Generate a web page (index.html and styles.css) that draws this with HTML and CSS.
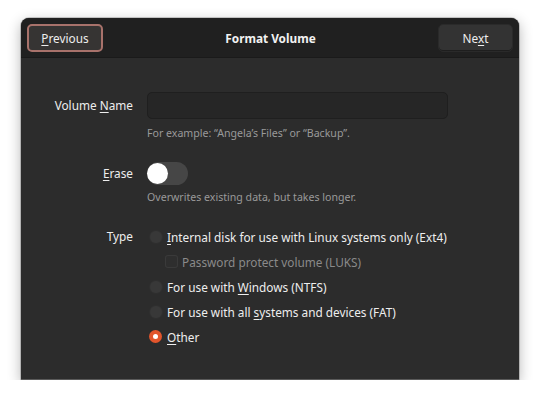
FILE: index.html
```html
<!DOCTYPE html>
<html>
<head>
<meta charset="utf-8">
<link rel="stylesheet" href="styles.css">
</head>
<body>
<div class="window">
  <header class="headerbar">
    <button class="btn btn-prev"><u>P</u>revious</button>
    <div class="title">Format Volume</div>
    <button class="btn btn-next">Ne<u>x</u>t</button>
  </header>
  <main class="content">
    <div class="row row-name">
      <div class="label">Volume <u>N</u>ame</div>
      <div class="field">
        <div class="entry"></div>
        <div class="hint">For example: “Angela’s Files” or “Backup”.</div>
      </div>
    </div>
    <div class="row row-erase">
      <div class="label"><u>E</u>rase</div>
      <div class="field">
        <div class="switch"><span class="knob"></span></div>
        <div class="hint">Overwrites existing data, but takes longer.</div>
      </div>
    </div>
    <div class="row row-type">
      <div class="label">Type</div>
      <div class="field options">
        <div class="opt"><span class="radio"></span><span><u>I</u>nternal disk for use with Linux systems only (Ext4)</span></div>
        <div class="opt sub disabled"><span class="check"></span><span>Password protect volume (LUKS)</span></div>
        <div class="opt"><span class="radio"></span><span>For use with <u>W</u>indows (NTFS)</span></div>
        <div class="opt"><span class="radio"></span><span>For use with all <u>s</u>ystems and devices (FAT)</span></div>
        <div class="opt"><span class="radio on"></span><span><u>O</u>ther</span></div>
      </div>
    </div>
  </main>
</div>
</body>
</html>
```

FILE: styles.css
```css
html, body {
  margin: 0;
  padding: 0;
  background: #ffffff;
}
body {
  font-family: "Noto Sans", "DejaVu Sans", sans-serif;
  font-size: 11.8px;
  color: #eeeeee;
  padding: 18px 0 0 21px;
}
.window {
  width: 498px;
  height: 362px;
  border-radius: 8px 8px 0 0;
  background: #2c2c2c;
  box-shadow: 0 4px 14px rgba(0,0,0,0.3), 0 0 0 1px rgba(0,0,0,0.18);
  overflow: hidden;
  display: flex;
  flex-direction: column;
  border-bottom: 1px solid #5a5a5a;
  box-sizing: border-box;
}
.headerbar {
  height: 40px;
  background: #202020;
  display: flex;
  align-items: center;
  justify-content: space-between;
  padding: 0 6px;
  border-bottom: 1px solid #1a1a1a;
  box-sizing: border-box;
}
.title {
  font-weight: bold;
  font-size: 11.8px;
  color: #f2f2f2;
}
.btn {
  height: 28px;
  font-family: inherit;
  font-size: 11.8px;
  color: #eeeeee;
  background: #343434;
  border: 1px solid #2a2a2a;
  border-radius: 5px;
  padding: 0;
  box-sizing: border-box;
}
.btn-prev {
  width: 76px;
  border: 2px solid #a8726b;
  background: #363433;
}
.btn-next {
  width: 75px;
  background: #333333;
  box-shadow: inset 0 -1px 0 #1e1e1e;
}
.content {
  flex: 1;
  padding-top: 34px;
}
.row {
  display: grid;
  grid-template-columns: 112px 1fr;
  column-gap: 14px;
}
.label {
  text-align: right;
  color: #eeeeee;
}
.row-name .label {
  line-height: 27px;
}
.entry {
  width: 301px;
  height: 27px;
  background: #262626;
  border: 1px solid #1f1f1f;
  border-radius: 5px;
  box-sizing: border-box;
}
.hint {
  font-size: 10.6px;
  color: #9a9a9a;
  margin-top: 6px;
  line-height: 16px;
}
.row-erase {
  margin-top: 21px;
}
.row-erase .label {
  line-height: 23px;
}
.switch {
  width: 41px;
  height: 23px;
  border-radius: 12px;
  background: #464646;
  display: flex;
  align-items: center;
}
.knob {
  width: 21px;
  height: 21px;
  border-radius: 50%;
  background: #ffffff;
}
.row-erase .hint {
  margin-top: 4px;
}
.row-type {
  margin-top: 19px;
}
.row-type .label {
  line-height: 25px;
}
.options {
  display: flex;
  flex-direction: column;
  margin-left: 3px;
}
.opt {
  height: 25px;
  display: flex;
  align-items: center;
  gap: 4px;
  color: #eeeeee;
}
.opt.sub {
  margin-left: 16px;
  gap: 5px;
}
.opt.disabled {
  color: #8a8a8a;
}
.radio {
  width: 12px;
  height: 12px;
  border-radius: 50%;
  background: #383838;
  box-shadow: 0 0 0 1px #303030;
  flex: none;
  margin-right: 1px;
}
.radio.on {
  width: 13px;
  height: 13px;
  background: #e2552c;
  box-shadow: none;
  display: flex;
  align-items: center;
  justify-content: center;
  margin-left: -1px;
  margin-right: 1px;
}
.radio.on::after {
  content: "";
  width: 5px;
  height: 5px;
  border-radius: 50%;
  background: #ffffff;
}
.check {
  width: 11px;
  height: 11px;
  border-radius: 2px;
  background: #2e2e2e;
  box-shadow: 0 0 0 1px #3a3a3a;
  flex: none;
}
u {
  text-decoration-thickness: 1px;
  text-underline-offset: 2px;
}
```
